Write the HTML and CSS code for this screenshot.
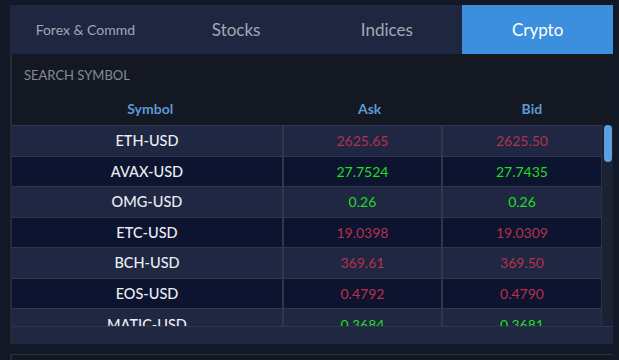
FILE: index.html
```html
<!DOCTYPE html>
<html lang="en">
  <head>
    <meta charset="UTF-8" />
    <meta name="viewport" content="width=device-width, initial-scale=1.0" />
    <title>Market Watch</title>
    <link rel="stylesheet" href="styles.css">
  </head>
  <body>
    <div class="watch">
      <div class="tabs">
        <div class="tab tab-small">Forex &amp; Commd</div>
        <div class="tab">Stocks</div>
        <div class="tab">Indices</div>
        <div class="tab active">Crypto</div>
      </div>
      <div class="panel">
        <input class="search" type="text" placeholder="SEARCH SYMBOL" />
        <table class="head">
          <tr>
            <th class="col-sym">Symbol</th>
            <th class="col-val">Ask</th>
            <th class="col-val">Bid</th>
          </tr>
        </table>
        <div class="list">
          <div class="rows">
            <table class="quotes" id="quotes"></table>
          </div>
          <div class="scrollbar">
            <div class="thumb"></div>
          </div>
        </div>
        <div class="foot"></div>
      </div>
      <div class="next-panel"></div>
    </div>

    <script>
      const quotes = [
        ["ETH-USD", "2625.65", "2625.50", "down"],
        ["AVAX-USD", "27.7524", "27.7435", "up"],
        ["OMG-USD", "0.26", "0.26", "up"],
        ["ETC-USD", "19.0398", "19.0309", "down"],
        ["BCH-USD", "369.61", "369.50", "down"],
        ["EOS-USD", "0.4792", "0.4790", "down"],
        ["MATIC-USD", "0.3684", "0.3681", "up"]
      ];

      const table = document.getElementById("quotes");
      quotes.forEach(function (q) {
        const row = document.createElement("tr");
        row.innerHTML =
          '<td class="col-sym">' + q[0] + "</td>" +
          '<td class="col-val ' + q[3] + '">' + q[1] + "</td>" +
          '<td class="col-val ' + q[3] + '">' + q[2] + "</td>";
        table.appendChild(row);
      });
    </script>
  </body>
</html>
```

FILE: styles.css
```css
* {
  box-sizing: border-box;
  margin: 0;
  padding: 0;
  font-family: Lato, "Open Sans", sans-serif;
}

body {
  background-color: #131826;
  padding: 5px 0 0 10px;
  height: 100vh;
  overflow: hidden;
}

.watch {
  width: 603px;
}

/* Tabs */
.tabs {
  display: grid;
  grid-template-columns: repeat(4, 1fr);
  height: 49px;
  background-color: #1f2740;
}

.tab {
  display: flex;
  justify-content: center;
  align-items: center;
  color: #a3a7b3;
  font-size: 17px;
  cursor: pointer;
}

.tab-small {
  font-size: 14px;
}

.tab.active {
  background-color: #3b8fdc;
  color: #ffffff;
}

/* Panel */
.panel {
  background-color: #141823;
  border-left: 2px solid #232a3a;
}

.search {
  display: block;
  width: 100%;
  height: 38px;
  padding: 4px 12px 0;
  border: none;
  outline: none;
  background: transparent;
  color: #d0d3da;
  font-size: 13px;
}

.search::placeholder {
  color: #868b98;
}

table {
  width: 100%;
  border-collapse: collapse;
  table-layout: fixed;
}

.col-sym {
  width: 46%;
}

.col-val {
  width: 27%;
}

.head th {
  height: 33px;
  color: #5c9ad6;
  font-size: 14px;
  font-weight: 700;
  text-align: center;
}

/* Quote list */
.list {
  display: flex;
  height: 201px;
}

.rows {
  flex: 1;
  overflow: hidden;
}

.scrollbar {
  width: 12px;
  padding: 0 1px 0 2px;
  background-color: #1b2233;
  border-left: 1px solid #2a3248;
}

.thumb {
  height: 37px;
  background-color: #5a9fe0;
  border-radius: 5px;
}

.quotes td {
  height: 30.5px;
  border-top: 1px solid #2f374f;
  border-left: 2px solid #2f374f;
  text-align: center;
  font-size: 14px;
  color: #d6d9e2;
}

.quotes td:first-child {
  border-left: none;
}

.quotes tr:nth-child(odd) td {
  background-color: #1f2742;
}

.quotes tr:nth-child(even) td {
  background-color: #0d1430;
}

.quotes .col-sym {
  color: #eceef3;
  font-weight: 500;
  font-size: 14.5px;
}

.up {
  color: #22dc22 !important;
}

.down {
  color: #b8304c !important;
}

.foot {
  height: 18px;
  background-color: #1e2640;
  border-top: 1px solid #2f374f;
}

.next-panel {
  margin-top: 10px;
  height: 40px;
  background-color: #141823;
  border-top: 1px solid #2a3142;
  border-left: 2px solid #232a3a;
}
```
